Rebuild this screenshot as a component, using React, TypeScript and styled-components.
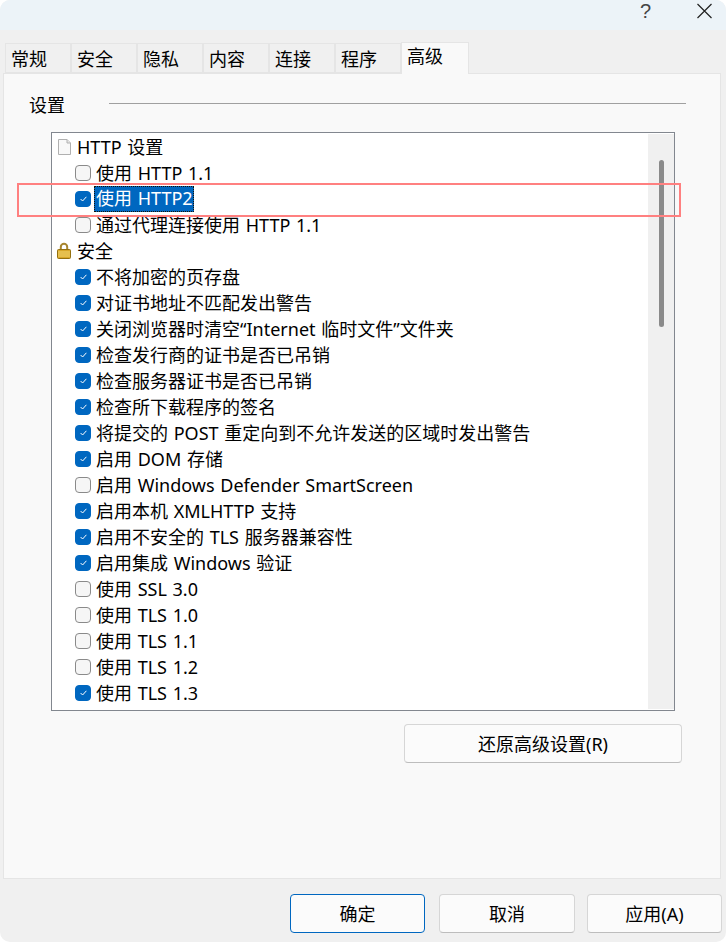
import styled, { createGlobalStyle } from "styled-components";

const GlobalStyle = createGlobalStyle`
  html, body {
    margin: 0;
    padding: 0;
    background: #ffffff;
  }
`;

const Dialog = styled.div`
  position: relative;
  width: 726px;
  height: 942px;
  display: flex;
  flex-direction: column;
  background: #f0f0f0;
  border-radius: 10px;
  overflow: hidden;
  font-family: "Noto Sans", "Noto Sans CJK SC", sans-serif;
  font-size: 18px;
  word-spacing: 1px;
  color: #000;
`;

const TitleBar = styled.div`
  height: 30px;
  flex: none;
  display: flex;
  align-items: flex-start;
  justify-content: flex-end;
  background: #ecf3f8;
  padding-right: 13px;
  gap: 45px;
`;

const HelpMark = styled.span`
  font-family: "Liberation Sans", sans-serif;
  font-size: 20px;
  line-height: normal;
  color: #444;
`;

const CloseIcon = styled.svg`
  display: block;
  width: 17px;
  height: 16px;
  margin-top: 3px;
`;

const TabStrip = styled.div`
  display: flex;
  align-items: flex-end;
  height: 43px;
  padding-left: 5px;
  flex: none;
`;

const Tab = styled.div<{ $active?: boolean }>`
  box-sizing: border-box;
  width: ${(p) => (p.$active ? "68px" : "66px")};
  height: ${(p) => (p.$active ? "32px" : "30px")};
  margin-bottom: ${(p) => (p.$active ? "-1px" : "0")};
  padding-left: 5px;
  padding-top: ${(p) => (p.$active ? "0" : "1px")};
  line-height: ${(p) => (p.$active ? "26px" : "28px")};
  background: ${(p) => (p.$active ? "#f9f9f9" : "#f0f0f0")};
  border: 1px solid #e5e5e5;
  border-bottom: ${(p) => (p.$active ? "none" : "1px solid #e5e5e5")};
  position: relative;
  z-index: ${(p) => (p.$active ? 1 : 0)};
`;

const Panel = styled.div`
  box-sizing: border-box;
  width: 718px;
  height: 806px;
  margin-left: 3px;
  flex: none;
  background: #f9f9f9;
  border: 1px solid #e5e5e5;
  padding: 0 33px 0 47px;
  display: flex;
  flex-direction: column;
`;

const GroupHeading = styled.div`
  display: flex;
  align-items: center;
  height: 58px;
  margin-left: -22px;
  margin-right: 1px;
  flex: none;
`;

const GroupLabel = styled.span`
  width: 80px;
  flex: none;
  padding-top: 2px;
`;

const GroupRule = styled.div`
  flex: 1;
  height: 1px;
  background: #a0a0a0;
  margin-top: 1px;
`;

const TreeBox = styled.div`
  box-sizing: border-box;
  width: 624px;
  height: 579px;
  flex: none;
  display: flex;
  background: #ffffff;
  border: 1px solid #82878f;
`;

const TreeList = styled.div`
  flex: 1;
  padding-top: 1px;
  overflow: hidden;
`;

const Row = styled.div<{ $indent?: boolean }>`
  display: flex;
  align-items: center;
  height: 26px;
  padding-left: ${(p) => (p.$indent ? "23px" : "5px")};
  white-space: nowrap;
`;

const Box = styled.span<{ $on?: boolean }>`
  box-sizing: border-box;
  width: 16px;
  height: 16px;
  flex: none;
  display: flex;
  align-items: center;
  justify-content: center;
  margin-right: 5px;
  border-radius: 4px;
  background: ${(p) => (p.$on ? "#0067c0" : "#f6f6f6")};
  border: 1px solid ${(p) => (p.$on ? "#0067c0" : "#8a8a8a")};
`;

const IconSlot = styled.svg`
  display: block;
  width: 16px;
  height: 18px;
  flex: none;
  margin-right: 4px;
`;

const RowText = styled.span<{ $selected?: boolean }>`
  line-height: 26px;
  ${(p) =>
    p.$selected
      ? `
    box-sizing: border-box;
    margin-left: -2px;
    padding: 0 1px 0 2px;
    height: 26px;
    line-height: 24px;
    background: #0067c0;
    color: #ffffff;
    outline: 1px dotted #1a1206;
    outline-offset: -1px;
  `
      : ""}
`;

const ScrollTrack = styled.div`
  width: 26px;
  flex: none;
  margin: 1px 0;
  background: #f0f0f0;
  padding-top: 26px;
  display: flex;
  justify-content: center;
`;

const ScrollThumb = styled.div`
  width: 5px;
  height: 167px;
  border-radius: 3px;
  background: #8a8a8a;
`;

const RestoreRow = styled.div`
  display: flex;
  justify-content: flex-end;
  width: 631px;
  margin-top: 13px;
`;

const Button = styled.div<{ $width: number; $primary?: boolean }>`
  box-sizing: border-box;
  width: ${(p) => p.$width}px;
  height: 39px;
  padding-bottom: 2px;
  display: flex;
  align-items: center;
  justify-content: center;
  background: #fbfbfb;
  border-radius: 4px;
  border: 1px solid ${(p) => (p.$primary ? "#0067c0" : "#d6d6d6")};
  border-bottom-color: ${(p) => (p.$primary ? "#0067c0" : "#bdbdbd")};
`;

const Footer = styled.div`
  display: flex;
  justify-content: flex-end;
  padding: 15px 4px 0 0;
`;

const CancelSlot = styled.div`
  margin: 0 12px 0 14px;
`;

const Annotation = styled.div`
  position: absolute;
  left: 17px;
  top: 183px;
  width: 660px;
  height: 30px;
  border: 2px solid #ff8080;
  pointer-events: none;
`;

const tabs = ["常规", "安全", "隐私", "内容", "连接", "程序", "高级"];

type Item = { label: string; checked?: boolean; icon?: "page" | "lock"; selected?: boolean };

const items: Item[] = [
  { label: "HTTP 设置", icon: "page" },
  { label: "使用 HTTP 1.1" },
  { label: "使用 HTTP2", checked: true, selected: true },
  { label: "通过代理连接使用 HTTP 1.1" },
  { label: "安全", icon: "lock" },
  { label: "不将加密的页存盘", checked: true },
  { label: "对证书地址不匹配发出警告", checked: true },
  { label: "关闭浏览器时清空“Internet 临时文件”文件夹", checked: true },
  { label: "检查发行商的证书是否已吊销", checked: true },
  { label: "检查服务器证书是否已吊销", checked: true },
  { label: "检查所下载程序的签名", checked: true },
  { label: "将提交的 POST 重定向到不允许发送的区域时发出警告", checked: true },
  { label: "启用 DOM 存储", checked: true },
  { label: "启用 Windows Defender SmartScreen" },
  { label: "启用本机 XMLHTTP 支持", checked: true },
  { label: "启用不安全的 TLS 服务器兼容性", checked: true },
  { label: "启用集成 Windows 验证", checked: true },
  { label: "使用 SSL 3.0" },
  { label: "使用 TLS 1.0" },
  { label: "使用 TLS 1.1" },
  { label: "使用 TLS 1.2" },
  { label: "使用 TLS 1.3", checked: true },
];

const PageIcon = () => (
  <IconSlot viewBox="0 0 16 18">
    <path d="M1.5 1.5h8.5l3.5 3.5v11.5h-12z" fill="#f8f8f8" stroke="#b0b0b0" />
    <path d="M10 1.5v3.5h3.5" fill="#e6e6e6" stroke="#b0b0b0" />
  </IconSlot>
);

const LockIcon = () => (
  <IconSlot viewBox="0 0 16 18">
    <path d="M3.8 8V5a3.2 3.2 0 0 1 6.4 0V8" fill="none" stroke="#a8862f" strokeWidth="2" />
    <rect x="0.5" y="7.5" width="13" height="9" rx="1" fill="#d8a72a" stroke="#94700f" />
    <path d="M1 10h12M1 12h12M1 14h12" stroke="#f3d873" strokeWidth="1" />
  </IconSlot>
);

const Tick = () => (
  <svg width="7" height="6" viewBox="0 0 7 6">
    <path d="M0.6 3 2.6 5 6.4 0.8" fill="none" stroke="#ffffff" strokeWidth="1" />
  </svg>
);

const App = () => (
  <Dialog>
    <GlobalStyle />
    <TitleBar>
      <HelpMark>?</HelpMark>
      <CloseIcon viewBox="0 0 17 16">
        <path d="M1.5 1 15.5 15M15.5 1 1.5 15" stroke="#222" strokeWidth="1.2" fill="none" />
      </CloseIcon>
    </TitleBar>
    <TabStrip>
      {tabs.map((t) => (
        <Tab key={t} $active={t === "高级"}>
          {t}
        </Tab>
      ))}
    </TabStrip>
    <Panel>
      <GroupHeading>
        <GroupLabel>设置</GroupLabel>
        <GroupRule />
      </GroupHeading>
      <TreeBox>
        <TreeList>
          {items.map((item) => (
            <Row key={item.label} $indent={!item.icon}>
              {item.icon === "page" && <PageIcon />}
              {item.icon === "lock" && <LockIcon />}
              {!item.icon && <Box $on={item.checked}>{item.checked && <Tick />}</Box>}
              <RowText $selected={item.selected}>{item.label}</RowText>
            </Row>
          ))}
        </TreeList>
        <ScrollTrack>
          <ScrollThumb />
        </ScrollTrack>
      </TreeBox>
      <RestoreRow>
        <Button $width={278}>还原高级设置(R)</Button>
      </RestoreRow>
    </Panel>
    <Footer>
      <Button $width={135} $primary>
        确定
      </Button>
      <CancelSlot>
        <Button $width={136}>取消</Button>
      </CancelSlot>
      <Button $width={135}>应用(A)</Button>
    </Footer>
    <Annotation />
  </Dialog>
);

export default App;
